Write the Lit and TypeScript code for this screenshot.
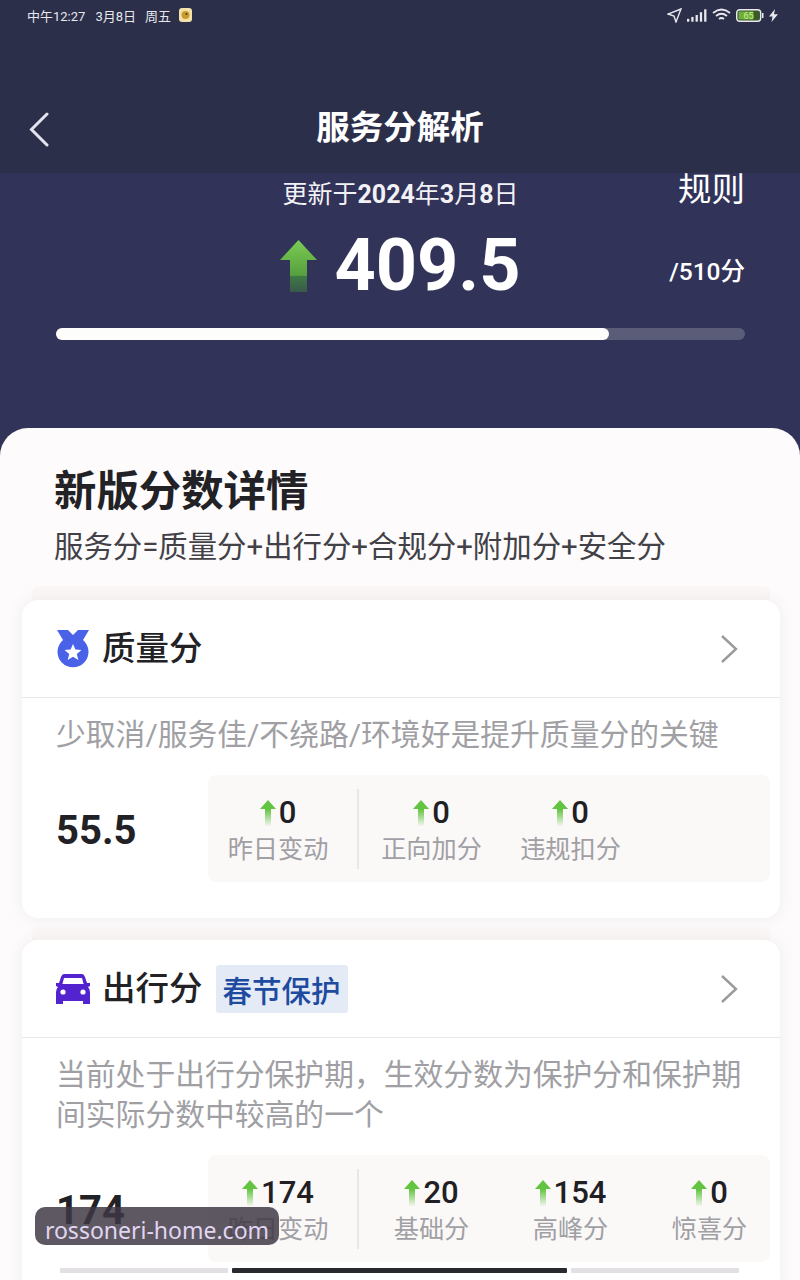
import { LitElement, html, css, svg } from 'lit';
import { customElement } from 'lit/decorators.js';

interface Stat {
  value: string;
  label: string;
}

const qualityStats: Stat[] = [
  { value: '0', label: '昨日变动' },
  { value: '0', label: '正向加分' },
  { value: '0', label: '违规扣分' },
];

const tripStats: Stat[] = [
  { value: '174', label: '昨日变动' },
  { value: '20', label: '基础分' },
  { value: '154', label: '高峰分' },
  { value: '0', label: '惊喜分' },
];

const smallArrow = svg`
  <svg class="up" viewBox="0 0 16 26">
    <defs>
      <linearGradient id="fade" x1="0" y1="0" x2="0" y2="1">
        <stop offset="0.35" stop-color="#62c440"/>
        <stop offset="1" stop-color="#62c440" stop-opacity="0.05"/>
      </linearGradient>
    </defs>
    <path d="M8 0 L16 9 H11 V26 H5 V9 H0 Z" fill="url(#fade)"/>
  </svg>`;

@customElement('app-root')
export class AppRoot extends LitElement {
  static styles = css`
    :host {
      display: block;
      position: relative;
      width: 800px;
      height: 1280px;
      overflow: hidden;
      background: #fdfbfb;
      font-family: Roboto, 'Noto Sans CJK SC', sans-serif;
      color: #222226;
    }

    .top {
      height: 173px;
      background: #2c2f49;
      color: #fff;
      display: flex;
      flex-direction: column;
    }

    .status {
      height: 30px;
      padding: 0 22px 0 27px;
      display: flex;
      align-items: center;
      font-size: 13px;
      color: #e8e8ee;
    }

    .status .date {
      margin-left: 10px;
    }

    .status .day {
      margin-left: 9px;
    }

    .status .emoji {
      margin-left: 8px;
      width: 13px;
      height: 14px;
    }

    .status .icons {
      margin-left: auto;
      display: flex;
      align-items: center;
      gap: 5px;
    }

    .nav {
      margin-top: 62px;
      height: 72px;
      padding: 0 28px;
      display: grid;
      grid-template-columns: 1fr auto 1fr;
      align-items: center;
    }

    .nav svg {
      width: 22px;
      height: 36px;
      margin-top: 3px;
    }

    .nav h1 {
      margin: 0;
      font-size: 33.5px;
      line-height: 44px;
      font-weight: 700;
    }

    .hero {
      height: 285px;
      padding: 0 55px 0 56px;
      background: #323359;
      color: #fff;
    }

    .hero-row {
      display: grid;
      grid-template-columns: 1fr auto 1fr;
    }

    .updated {
      margin-top: 5px;
      font-size: 25px;
      line-height: 34px;
      color: #f2f2f6;
    }

    .updated b {
      font-weight: 700;
    }

    .rule {
      justify-self: end;
      font-size: 33.5px;
      line-height: 34px;
    }

    .score-row {
      margin-top: 14px;
      align-items: center;
    }

    .total {
      justify-self: end;
      font-size: 24.5px;
      font-weight: 500;
      padding-top: 6px;
    }

    .score {
      display: flex;
      align-items: center;
      gap: 17px;
      font-size: 72px;
      line-height: 80px;
      font-weight: 700;
    }

    .score svg {
      width: 37px;
      height: 52px;
    }

    .bar {
      margin-top: 22px;
      height: 12px;
      border-radius: 6px;
      background: #5b5c78;
    }

    .bar div {
      height: 100%;
      border-radius: 6px;
      background: #fdfdfb;
    }

    .sheet {
      margin-top: -30px;
      height: 860px;
      padding-top: 40px;
      border-radius: 28px 28px 0 0;
      background: #fdfbfb;
    }

    .sheet > h2 {
      margin: 0 0 0 54px;
      font-size: 42.4px;
      line-height: 48px;
      font-weight: 700;
    }

    .formula {
      margin: 11px 0 0 54px;
      font-size: 29.4px;
      line-height: 40px;
      color: #414147;
    }

    .card {
      margin: 33px 20px 0 22px;
      border-radius: 16px;
      background: #fff;
      box-shadow: 0 0 16px rgba(60, 60, 80, 0.08), 0 -24px 0 -10px #faf7f6;
    }

    .card + .card {
      margin-top: 22px;
    }

    .card-head {
      height: 98px;
      padding: 0 42px 0 34px;
      display: flex;
      align-items: center;
      border-bottom: 1px solid #e8e8ec;
      box-sizing: border-box;
    }

    .card-head .icon {
      width: 34px;
      height: 38px;
      margin-right: 12px;
    }

    .card-head h3 {
      margin: 0 0 6px;
      font-size: 33.5px;
      font-weight: 500;
    }

    .tag {
      margin-left: 13px;
      padding: 0 7px;
      height: 48px;
      display: flex;
      align-items: center;
      border-radius: 3px;
      background: #e4eaf6;
      color: #1e4ba0;
      font-size: 29.5px;
      font-weight: 500;
    }

    .chevron {
      margin-left: auto;
      width: 18px;
      height: 30px;
    }

    .desc {
      margin: 17px 34px 0 34px;
      font-size: 29.8px;
      line-height: 40px;
      color: #a0a0a4;
    }

    .figures {
      margin-top: 20px;
      padding-bottom: 36px;
      display: flex;
      align-items: center;
    }

    .main-figure {
      width: 186px;
      padding: 3px 0 0 34px;
      box-sizing: border-box;
      font-size: 40px;
      font-weight: 700;
    }

    .panel {
      width: 562px;
      height: 107px;
      display: flex;
      align-items: center;
      border-radius: 8px;
      background: #fbf8f8;
    }

    .stat {
      flex: none;
      width: 139px;
      height: 80px;
      padding-top: 6px;
      box-sizing: border-box;
      text-align: center;
    }

    .stat:first-child {
      width: 151px;
      margin-right: 3px;
      border-right: 2px solid #e8e6e6;
      padding-right: 9px;
    }

    .value {
      display: flex;
      justify-content: center;
      align-items: center;
      gap: 3px;
      height: 36px;
      font-size: 31px;
      font-weight: 500;
      color: #202024;
    }

    .up {
      width: 16px;
      height: 26px;
    }

    .label {
      font-size: 25.2px;
      line-height: 38px;
      color: #a0a0a4;
    }

    .watermark {
      position: absolute;
      left: 35px;
      top: 1207px;
      width: 244px;
      height: 38px;
      border-radius: 10px;
      background: rgba(62, 56, 68, 0.84);
      color: #e2d5f2;
      font-family: 'Noto Sans', sans-serif;
      font-size: 23px;
      line-height: 47px;
      text-align: center;
    }

    .home {
      position: absolute;
      left: 60px;
      right: 61px;
      top: 1268px;
      display: flex;
      gap: 4px;
    }

    .home div {
      flex: 1;
      height: 5px;
      border-radius: 1px;
      background: #e2e0e2;
    }

    .home .active {
      flex: 2;
      background: #2a2a2e;
    }
  `;

  renderStats(stats: Stat[]) {
    return html`
      <div class="panel">
        ${stats.map(
          s => html`
            <div class="stat">
              <div class="value">${smallArrow}<span>${s.value}</span></div>
              <div class="label">${s.label}</div>
            </div>
          `
        )}
      </div>
    `;
  }

  renderChevron() {
    return html`
      <svg class="chevron" viewBox="0 0 18 30" fill="none" stroke="#9a9a9e" stroke-width="2.4">
        <path d="M2 2 L16 15 L2 28" />
      </svg>
    `;
  }

  render() {
    return html`
      <div class="top">
        <div class="status">
          <span>中午12:27</span>
          <span class="date">3月8日</span>
          <span class="day">周五</span>
          <svg class="emoji" viewBox="0 0 13 14">
            <rect width="13" height="14" rx="3" fill="#f3e2a8" />
            <circle cx="6.5" cy="7" r="4" fill="#c99a2c" />
            <circle cx="7.5" cy="6" r="1" fill="#4c3a12" />
          </svg>
          <div class="icons">
            <svg width="15" height="15" viewBox="0 0 15 15" fill="none" stroke="#e8e8ee" stroke-width="1.4">
              <path d="M14 1 L1 6 L7 8 L9 14 Z" />
            </svg>
            <svg width="20" height="13" viewBox="0 0 21 13" fill="#e8e8ee">
              <rect x="0" y="10" width="2.4" height="3" />
              <rect x="4.5" y="8" width="2.4" height="5" />
              <rect x="9" y="6" width="2.4" height="7" />
              <rect x="13.5" y="3" width="2.4" height="10" />
              <rect x="18" y="0" width="2.4" height="13" />
            </svg>
            <svg width="19" height="14" viewBox="0 0 19 14" fill="none" stroke="#e8e8ee" stroke-width="1.7">
              <path d="M1 5 Q9.5 -2 18 5" />
              <path d="M4 8 Q9.5 3.5 15 8" />
              <path d="M7 11 Q9.5 9 12 11" />
            </svg>
            <svg width="28" height="13" viewBox="0 0 28 13">
              <rect x="0.7" y="0.7" width="24" height="11.6" rx="3" fill="#3a5a2a" stroke="#e8e8ee" stroke-width="1.4" />
              <rect x="2.5" y="2.5" width="15" height="8" rx="1" fill="#6fae3e" />
              <rect x="26" y="4" width="1.5" height="5" fill="#e8e8ee" />
              <text x="12.5" y="10" font-size="9" text-anchor="middle" fill="#c8f08a" font-family="Roboto">65</text>
            </svg>
            <svg width="9" height="13" viewBox="0 0 9 13" fill="#e8e8ee">
              <path d="M6 0 L0 7.5 H3.5 L2.5 13 L9 5.2 H5 Z" />
            </svg>
          </div>
        </div>
        <div class="nav">
          <svg viewBox="0 0 22 36" fill="none" stroke="#e4e4f0" stroke-width="3" stroke-linecap="round">
            <path d="M19 2 L3.5 17.5 L19 33" />
          </svg>
          <h1>服务分解析</h1>
        </div>
      </div>

      <div class="hero">
        <div class="hero-row">
          <span></span>
          <div class="updated">更新于<b>2024</b>年<b>3</b>月<b>8</b>日</div>
          <div class="rule">规则</div>
        </div>
        <div class="hero-row score-row">
          <span></span>
          <div class="score">
            <svg viewBox="0 0 37 52">
              <defs>
                <linearGradient id="big" x1="0" y1="0" x2="0" y2="1">
                  <stop offset="0" stop-color="#7ccb54" />
                  <stop offset="0.68" stop-color="#56a03e" />
                  <stop offset="0.7" stop-color="#3f7a45" />
                  <stop offset="1" stop-color="#3c6a44" stop-opacity="0.7" />
                </linearGradient>
              </defs>
              <path d="M18.5 0 L37 20 H27 V52 H10 V20 H0 Z" fill="url(#big)" />
            </svg>
            <span>409.5</span>
          </div>
          <div class="total">/510分</div>
        </div>
        <div class="bar"><div style="width: ${(409.5 / 510) * 100}%"></div></div>
      </div>

      <div class="sheet">
        <h2>新版分数详情</h2>
        <div class="formula">服务分=质量分+出行分+合规分+附加分+安全分</div>

        <section class="card">
          <div class="card-head">
            <svg class="icon" viewBox="0 0 34 38">
              <path d="M1 0 H12 L17 5 L22 0 H33 L27 10 A15.5 15.5 0 1 1 7 10 Z" fill="#4a62e8" />
              <circle cx="17" cy="22" r="10" fill="#4a62e8" />
              <path d="M17 14 L19.4 19.6 L25.4 20 L20.8 24 L22.3 30 L17 26.8 L11.7 30 L13.2 24 L8.6 20 L14.6 19.6 Z" fill="#fff" />
            </svg>
            <h3>质量分</h3>
            ${this.renderChevron()}
          </div>
          <div class="desc">少取消/服务佳/不绕路/环境好是提升质量分的关键</div>
          <div class="figures">
            <div class="main-figure">55.5</div>
            ${this.renderStats(qualityStats)}
          </div>
        </section>

        <section class="card">
          <div class="card-head">
            <svg class="icon" viewBox="0 0 34 38">
              <path d="M8 4 H26 Q28 4 29 7 L31 13 H34 V16 L32 17 Q34 19 34 22 V34 H27 V31 H7 V34 H0 V22 Q0 19 2 17 L0 16 V13 H3 L5 7 Q6 4 8 4 Z M8 8 L6.4 14 H27.6 L26 8 Z" fill="#5423d0" fill-rule="evenodd" />
              <circle cx="7" cy="22" r="2.6" fill="#fff" />
              <circle cx="27" cy="22" r="2.6" fill="#fff" />
            </svg>
            <h3>出行分</h3>
            <span class="tag">春节保护</span>
            ${this.renderChevron()}
          </div>
          <div class="desc">当前处于出行分保护期，生效分数为保护分和保护期间实际分数中较高的一个</div>
          <div class="figures">
            <div class="main-figure">174</div>
            ${this.renderStats(tripStats)}
          </div>
        </section>
      </div>

      <div class="watermark">rossoneri-home.com</div>
      <div class="home">
        <div></div>
        <div class="active"></div>
        <div></div>
      </div>
    `;
  }
}
